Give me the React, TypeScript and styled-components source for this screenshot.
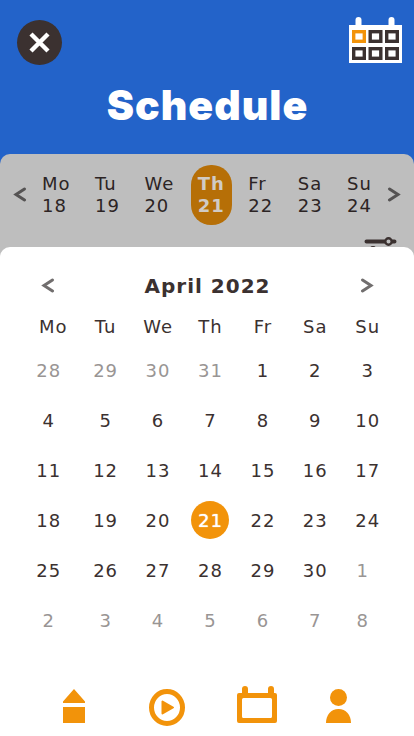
import React from "react";
import styled, { createGlobalStyle } from "styled-components";

const GlobalStyle = createGlobalStyle`
  * { box-sizing: border-box; }
  body {
    margin: 0;
    background: #ffffff;
    color: #3b3130;
    font-family: Verdana, "DejaVu Sans", sans-serif;
    font-size: 18px;
    letter-spacing: 1px;
  }
  button {
    margin: 0;
    padding: 0;
    border: 0;
    background: none;
    color: inherit;
    font: inherit;
    letter-spacing: inherit;
    cursor: pointer;
  }
  svg { display: block; }
`;

const Page = styled.div`
  display: flex;
  flex-direction: column;
  min-height: 100vh;
  background: #2363c9;
`;

const Header = styled.header`
  display: flex;
  flex-direction: column;
  padding: 17px 12px 25px 17px;
`;

const HeaderActions = styled.div`
  display: flex;
  justify-content: space-between;
  align-items: flex-end;
  height: 48px;
`;

const CloseButton = styled.button`
  display: grid;
  place-items: center;
  width: 45px;
  height: 45px;
  border-radius: 50%;
  background: #3b3130;
`;

const CalendarButton = styled.button`
  align-self: flex-start;
`;

const Title = styled.h1`
  margin: 16px 4px 0 0;
  color: #ffffff;
  font-family: "Arial Black", Inter, sans-serif;
  font-size: 41px;
  font-weight: 900;
  line-height: 48px;
  text-align: center;
`;

const WeekPanel = styled.section`
  padding: 11px 13px 0;
  border-radius: 10px 10px 0 0;
  background: #bebebe;
  color: #2c2424;
`;

const WeekRow = styled.div`
  display: flex;
  align-items: center;
  justify-content: space-between;
`;

const WeekDays = styled.div`
  display: flex;
  flex: 1;
  justify-content: space-between;
  padding: 0 15px;
`;

const WeekDay = styled.button<{ $active?: boolean }>`
  height: 60px;
  margin: ${(p) => (p.$active ? "0 -8px" : "0")};
  padding: ${(p) => (p.$active ? "0 7px" : "0")};
  border-radius: 20px;
  background: ${(p) => (p.$active ? "#b66f07" : "transparent")};
  color: ${(p) => (p.$active ? "#d0cbc5" : "inherit")};
  font-weight: ${(p) => (p.$active ? 700 : 400)};
  line-height: 22px;
  text-align: left;
`;

const Line = styled.span`
  display: block;
`;

const FilterRow = styled.div`
  display: flex;
  justify-content: flex-end;
  padding: 11px 4px 0;
`;

const Sheet = styled.main`
  position: relative;
  display: flex;
  flex: 1;
  flex-direction: column;
  margin-top: -13px;
  border-radius: 10px 10px 0 0;
  background: #ffffff;
`;

const MonthBar = styled.div`
  display: flex;
  align-items: center;
  justify-content: space-between;
  padding: 25px 40px 0 41px;
`;

const MonthTitle = styled.h2`
  margin: 0;
  font-size: 20px;
  font-weight: 700;
  line-height: 28px;
`;

const MonthTable = styled.table`
  width: calc(100% - 47px);
  margin: 7px 20px 0 27px;
  border-collapse: collapse;
  table-layout: fixed;
`;

const DayName = styled.th`
  height: 38px;
  padding: 0;
  font-weight: 400;
  text-align: center;
`;

const DayCell = styled.td<{ $muted?: boolean }>`
  height: 50px;
  padding: 0;
  text-align: center;

  &:first-child {
    padding-right: 9px;
  }

  &:last-child {
    padding-right: ${(p) => (p.$muted ? "10px" : "0")};
  }
`;

const DayButton = styled.button<{ $muted?: boolean; $selected?: boolean }>`
  width: 38px;
  height: 38px;
  border-radius: 50%;
  background: ${(p) => (p.$selected ? "#f2930a" : "transparent")};
  color: ${(p) => (p.$selected ? "#ffffff" : p.$muted ? "#999594" : "inherit")};
  text-shadow: ${(p) => (p.$selected ? "0 0 1px #ffffff" : "none")};
`;

const BottomNav = styled.nav`
  display: grid;
  grid-template-columns: 92fr 94fr 86fr 77fr;
  align-items: end;
  justify-items: center;
  margin-top: auto;
  padding: 0 37px 10px 28px;
  color: #f2930a;
`;

const NavLink = styled.a`
  color: inherit;
`;

function Chevron({ next, color }: { next?: boolean; color: string }) {
  return (
    <svg width="14" height="16" viewBox="0 0 14 16" fill="none" stroke={color} strokeWidth="3" strokeLinecap="round" strokeLinejoin="miter">
      <path d={next ? "M2.5 2 11 7.5 2.5 13" : "M11.5 2 3 7.5 11.5 13"} />
    </svg>
  );
}

const week = [
  ["Mo", 18],
  ["Tu", 19],
  ["We", 20],
  ["Th", 21],
  ["Fr", 22],
  ["Sa", 23],
  ["Su", 24],
] as const;

const firstDay = Date.UTC(2022, 2, 28);
const weeks = Array.from({ length: 6 }, (_, row) =>
  Array.from({ length: 7 }, (_, col) => new Date(firstDay + (row * 7 + col) * 86400000))
);

export default function App() {
  const [selected, setSelected] = React.useState(21);
  return (
    <Page>
      <GlobalStyle />
      <Header>
        <HeaderActions>
          <CloseButton aria-label="Close">
            <svg width="21" height="21" viewBox="0 0 21 21" stroke="#ffffff" strokeWidth="4.4" strokeLinecap="butt">
              <path d="M2 2 19 19M19 2 2 19" />
            </svg>
          </CloseButton>
          <CalendarButton aria-label="Month view">
            <svg width="53" height="46" viewBox="0 0 53 46">
              <path fill="#ffffff" d="M0 8h53v38H0z" />
              <rect x="6.5" y="0" width="6" height="12" rx="3" fill="#ffffff" />
              <rect x="39.5" y="0" width="6" height="12" rx="3" fill="#ffffff" />
              <g fill="none" stroke="#3b3130" strokeWidth="3.4">
                <rect x="4.7" y="14.7" width="10.6" height="9.6" stroke="#f2930a" />
                <rect x="21.2" y="14.7" width="10.6" height="9.6" />
                <rect x="37.7" y="14.7" width="10.6" height="9.6" />
                <rect x="4.7" y="31.7" width="10.6" height="9.6" />
                <rect x="21.2" y="31.7" width="10.6" height="9.6" />
                <rect x="37.7" y="31.7" width="10.6" height="9.6" />
              </g>
            </svg>
          </CalendarButton>
        </HeaderActions>
        <Title>Schedule</Title>
      </Header>

      <WeekPanel>
        <WeekRow>
          <button aria-label="Previous week">
            <Chevron color="#555353" />
          </button>
          <WeekDays>
            {week.map(([name, day]) => (
              <WeekDay key={name} $active={name === "Th"}>
                <Line>{name}</Line>
                <Line>{day}</Line>
              </WeekDay>
            ))}
          </WeekDays>
          <button aria-label="Next week">
            <Chevron next color="#555353" />
          </button>
        </WeekRow>
        <FilterRow>
          <button aria-label="Filters">
            <svg width="33" height="24" viewBox="0 0 33 24" stroke="#3b3130" strokeLinecap="round" fill="#bebebe">
              <path strokeWidth="4" d="M2.500 5.500h28M2.500 18.500h28" />
              <circle cx="24.500" cy="5.500" r="3.200" strokeWidth="2.400" />
              <circle cx="9" cy="14.500" r="3.200" strokeWidth="2.400" />
            </svg>
          </button>
        </FilterRow>
      </WeekPanel>

      <Sheet>
        <MonthBar>
          <button aria-label="Previous month">
            <Chevron color="#716e6e" />
          </button>
          <MonthTitle>April 2022</MonthTitle>
          <button aria-label="Next month">
            <Chevron next color="#716e6e" />
          </button>
        </MonthBar>
        <MonthTable>
          <thead>
            <tr>
              {week.map(([name]) => (
                <DayName key={name} scope="col">{name}</DayName>
              ))}
            </tr>
          </thead>
          <tbody>
            {weeks.map((row, i) => (
              <tr key={i}>
                {row.map((date) => {
                  const day = date.getUTCDate();
                  const muted = date.getUTCMonth() !== 3;
                  return (
                    <DayCell key={date.getTime()} $muted={muted}>
                      <DayButton $muted={muted} $selected={!muted && day === selected} onClick={() => !muted && setSelected(day)}>
                        {day}
                      </DayButton>
                    </DayCell>
                  );
                })}
              </tr>
            ))}
          </tbody>
        </MonthTable>
        <BottomNav>
          <NavLink href="#home" aria-label="Home">
            <svg width="22" height="37" viewBox="0 0 22 37" fill="currentColor">
              <path d="M11 0 22 12.5V14H0v-1.5ZM0 18h22v16H0z" />
            </svg>
          </NavLink>
          <NavLink href="#play" aria-label="Play">
            <svg width="36" height="37" viewBox="0 0 36 37">
              <ellipse cx="18" cy="18.5" rx="15.5" ry="16" fill="none" stroke="currentColor" strokeWidth="5" />
              <path fill="currentColor" stroke="currentColor" strokeWidth="2" strokeLinejoin="round" d="M13.5 12.5v12L24 18.5Z" />
            </svg>
          </NavLink>
          <NavLink href="#calendar" aria-label="Calendar">
            <svg width="40" height="40" viewBox="0 0 40 40" fill="currentColor">
              <path fillRule="evenodd" d="M2 7h3V3a3 3 0 0 1 6 0v4h20V3a3 3 0 0 1 6 0v4h1a2 2 0 0 1 2 2v26a2 2 0 0 1-2 2H2a2 2 0 0 1-2-2V9a2 2 0 0 1 2-2ZM6.5 12A1.5 1.5 0 0 0 5 13.5v17A1.5 1.5 0 0 0 6.5 32h27a1.5 1.5 0 0 0 1.5-1.5v-17A1.5 1.5 0 0 0 33.5 12Z" />
            </svg>
          </NavLink>
          <NavLink href="#profile" aria-label="Profile">
            <svg width="25" height="37" viewBox="0 0 25 37" fill="currentColor">
              <circle cx="12.5" cy="8.5" r="8.5" />
              <path d="M0 34C0 26 5 20 12.5 20S25 26 25 34Z" />
            </svg>
          </NavLink>
        </BottomNav>
      </Sheet>
    </Page>
  );
}
